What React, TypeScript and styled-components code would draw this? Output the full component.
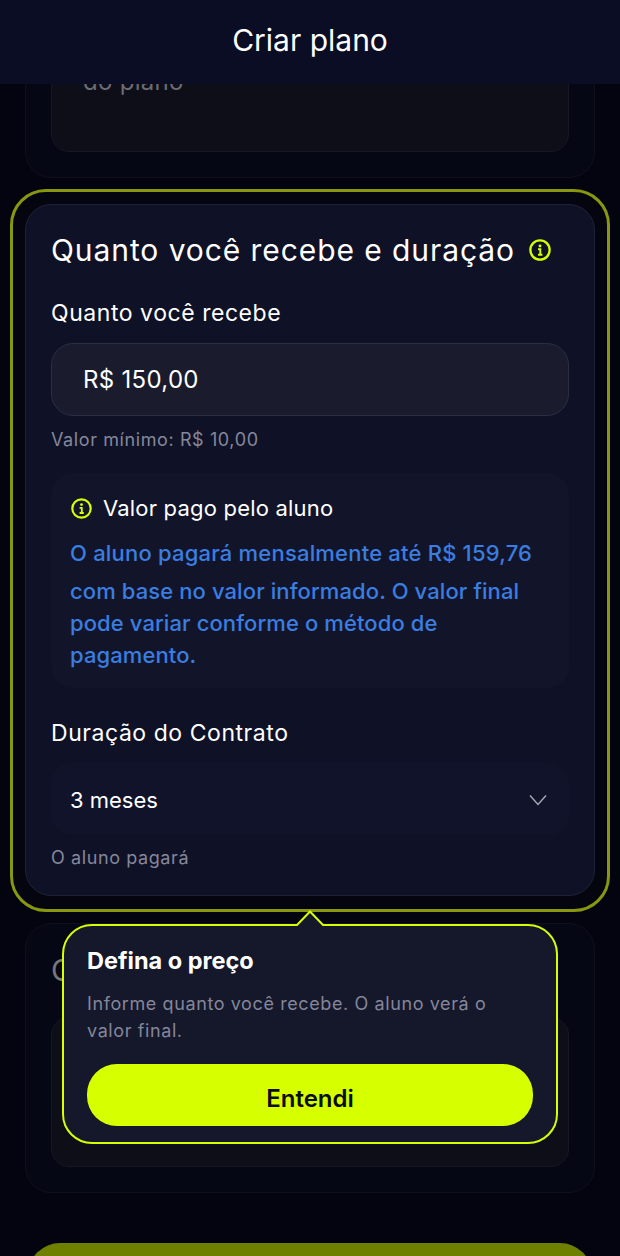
import React from 'react';
import { createGlobalStyle, styled } from 'styled-components';

const GlobalStyle = createGlobalStyle`
  html, body {
    margin: 0;
    padding: 0;
    background: #03040f;
  }
  * {
    box-sizing: border-box;
  }
`;

const Page = styled.div`
  position: relative;
  width: 620px;
  height: 1256px;
  padding: 0 25px;
  overflow: hidden;
  background: #03040f;
  font-family: Inter, 'Noto Sans', sans-serif;
`;

const Header = styled.header`
  position: absolute;
  top: 0;
  left: 0;
  right: 0;
  z-index: 2;
  height: 84px;
  padding-bottom: 5px;
  display: flex;
  align-items: center;
  justify-content: center;
  background: #0a0d24;
  color: #fff;
  font-size: 30px;
  font-weight: 400;
`;

const DimCard = styled.section<{ $height: number; $top?: boolean }>`
  height: ${(p) => p.$height}px;
  display: flex;
  flex-direction: column;
  justify-content: flex-end;
  padding: 0 25px 25px;
  background: #060714;
  border: 1px solid #0f101c;
  border-top-width: ${(p) => (p.$top ? 0 : 1)}px;
  border-radius: 26px;
`;

const DimField = styled.div<{ $height: number }>`
  height: ${(p) => p.$height}px;
  padding-left: 31px;
  background: #0d0e17;
  border: 1px solid #161722;
  border-radius: 18px;
  color: #6b6c74;
  font-size: 24px;
  letter-spacing: 0.3px;
`;

const DimPlaceholder = styled.div`
  margin-top: 67px;
  line-height: 28px;
`;

const DimHeading = styled.div`
  margin-bottom: 29px;
  color: #77777c;
  font-size: 30px;
  line-height: 36px;
`;

const Spotlight = styled.div`
  margin: 11px -15px;
  padding: 12px;
  padding-bottom: 13px;
  border: 3px solid #87980f;
  border-radius: 36px;
  background: #04050f;
`;

const Card = styled.section`
  height: 692px;
  padding: 27px 25px 0;
  background: #0f1226;
  border: 1px solid #1f2136;
  border-radius: 26px;
`;

const CardTitle = styled.h2`
  display: flex;
  align-items: center;
  gap: 14px;
  margin: 0;
  color: #fff;
  font-size: 30px;
  font-weight: 400;
  line-height: 36px;
  letter-spacing: 0.92px;
  white-space: nowrap;
`;

const Label = styled.div<{ $top: number }>`
  margin-top: ${(p) => p.$top}px;
  color: #fff;
  font-size: 23px;
  font-weight: 400;
  line-height: 28px;
  letter-spacing: 0.55px;
`;

const AmountField = styled.div`
  height: 73px;
  margin-top: 16px;
  padding-left: 31px;
  display: flex;
  align-items: center;
  background: #1a1c2e;
  border: 1px solid #2b2d42;
  border-radius: 22px;
  color: #fff;
  font-size: 24px;
  letter-spacing: 0.3px;
`;

const Hint = styled.div<{ $top: number }>`
  margin-top: ${(p) => p.$top}px;
  color: #85879a;
  font-size: 18px;
  line-height: 24px;
  letter-spacing: 0.6px;
`;

const InfoBox = styled.div`
  height: 215px;
  margin-top: 21px;
  padding: 21px 19px 0;
  background: #12152a;
  border-radius: 22px;
`;

const InfoTitle = styled.div`
  display: flex;
  align-items: center;
  gap: 11px;
  padding-left: 1px;
  color: #fff;
  font-size: 22px;
  line-height: 28px;
  letter-spacing: 0.2px;
`;

const InfoLead = styled.p`
  margin: 12px 0 0;
  color: #3b7de0;
  font-size: 22px;
  font-weight: 450;
  line-height: 38px;
  letter-spacing: 0.2px;
  white-space: nowrap;
`;

const InfoBody = styled.p`
  margin: 3px 0 0;
  color: #3b7de0;
  font-size: 22px;
  font-weight: 450;
  line-height: 32px;
  letter-spacing: 0.1px;
`;

const SelectField = styled.div`
  height: 72px;
  margin-top: 16px;
  padding: 2px 22px 0 19px;
  display: flex;
  align-items: center;
  justify-content: space-between;
  background: #10132a;
  border-radius: 20px;
  color: #fff;
  font-size: 22px;
`;

const Popover = styled.div`
  position: absolute;
  top: 924px;
  left: 62px;
  z-index: 3;
  width: 496px;
  height: 220px;
  padding: 21px 23px 0;
  background: #15172b;
  border: 2px solid #d6ff00;
  border-radius: 30px;
`;

const PopoverArrow = styled.svg`
  position: absolute;
  top: -16px;
  left: 50%;
  transform: translateX(-50%);
  display: block;
`;

const PopoverTitle = styled.div`
  color: #fff;
  font-size: 23.5px;
  font-weight: 700;
  line-height: 28px;
`;

const PopoverText = styled.p`
  margin: 15px 0 0;
  color: #84869a;
  font-size: 18px;
  line-height: 27px;
  letter-spacing: 0.6px;
`;

const PopoverButton = styled.button`
  display: block;
  width: 100%;
  height: 62px;
  margin-top: 20px;
  padding: 6px 0 0;
  background: #d6ff00;
  border: 0;
  border-radius: 30px;
  color: #0b0d0c;
  font-family: inherit;
  font-size: 24px;
  font-weight: 600;
`;

const BottomButton = styled.div`
  height: 80px;
  margin: 50px 3px 0;
  background: #6f7f00;
  border-radius: 32px;
`;

const InfoIcon = ({ size = 21, color = '#d6ff00' }: { size?: number; color?: string }) => (
  <svg width={size} height={size} viewBox="0 0 21 21" fill="none" style={{ flex: 'none' }}>
    <circle cx="10.5" cy="10.5" r="9.2" stroke={color} strokeWidth="2.2" />
    <circle cx="10.5" cy="6.6" r="1.4" fill={color} />
    <path d="M8.6 9.8h2.2v5M8.6 15h4.2" stroke={color} strokeWidth="1.8" />
  </svg>
);

const Chevron = () => (
  <svg width="18" height="12" viewBox="0 0 18 12" fill="none">
    <path d="M1 1.5 9 10.5 17 1.5" stroke="#a9abb8" strokeWidth="1.4" />
  </svg>
);

const App: React.FC = () => {
  return (
    <Page>
      <GlobalStyle />
      <Header>Criar plano</Header>

      <DimCard $height={178} $top>
        <DimField $height={152}>
          <DimPlaceholder>do plano</DimPlaceholder>
        </DimField>
      </DimCard>

      <Spotlight>
        <Card>
          <CardTitle>
            Quanto você recebe e duração
            <InfoIcon size={22} />
          </CardTitle>
          <Label $top={31}>Quanto você recebe</Label>
          <AmountField>R$ 150,00</AmountField>
          <Hint $top={12}>Valor mínimo: R$ 10,00</Hint>
          <InfoBox>
            <InfoTitle>
              <InfoIcon />
              Valor pago pelo aluno
            </InfoTitle>
            <InfoLead>O aluno pagará mensalmente até R$ 159,76</InfoLead>
            <InfoBody>com base no valor informado. O valor final pode variar conforme o método de pagamento.</InfoBody>
          </InfoBox>
          <Label $top={31}>Duração do Contrato</Label>
          <SelectField>
            3 meses
            <Chevron />
          </SelectField>
          <Hint $top={11}>O aluno pagará</Hint>
        </Card>
      </Spotlight>

      <DimCard $height={270}>
        <DimHeading>C</DimHeading>
        <DimField $height={150} />
      </DimCard>

      <BottomButton />

      <Popover>
        <PopoverArrow width="30" height="17" viewBox="0 0 30 17" fill="none">
          <path d="M2 15 15 1.5 28 15V17H2Z" fill="#15172b" />
          <path d="M0 15H2L15 1.5 28 15H30" stroke="#d6ff00" strokeWidth="2" />
        </PopoverArrow>
        <PopoverTitle>Defina o preço</PopoverTitle>
        <PopoverText>Informe quanto você recebe. O aluno verá o valor final.</PopoverText>
        <PopoverButton type="button">Entendi</PopoverButton>
      </Popover>
    </Page>
  );
};

export default App;
